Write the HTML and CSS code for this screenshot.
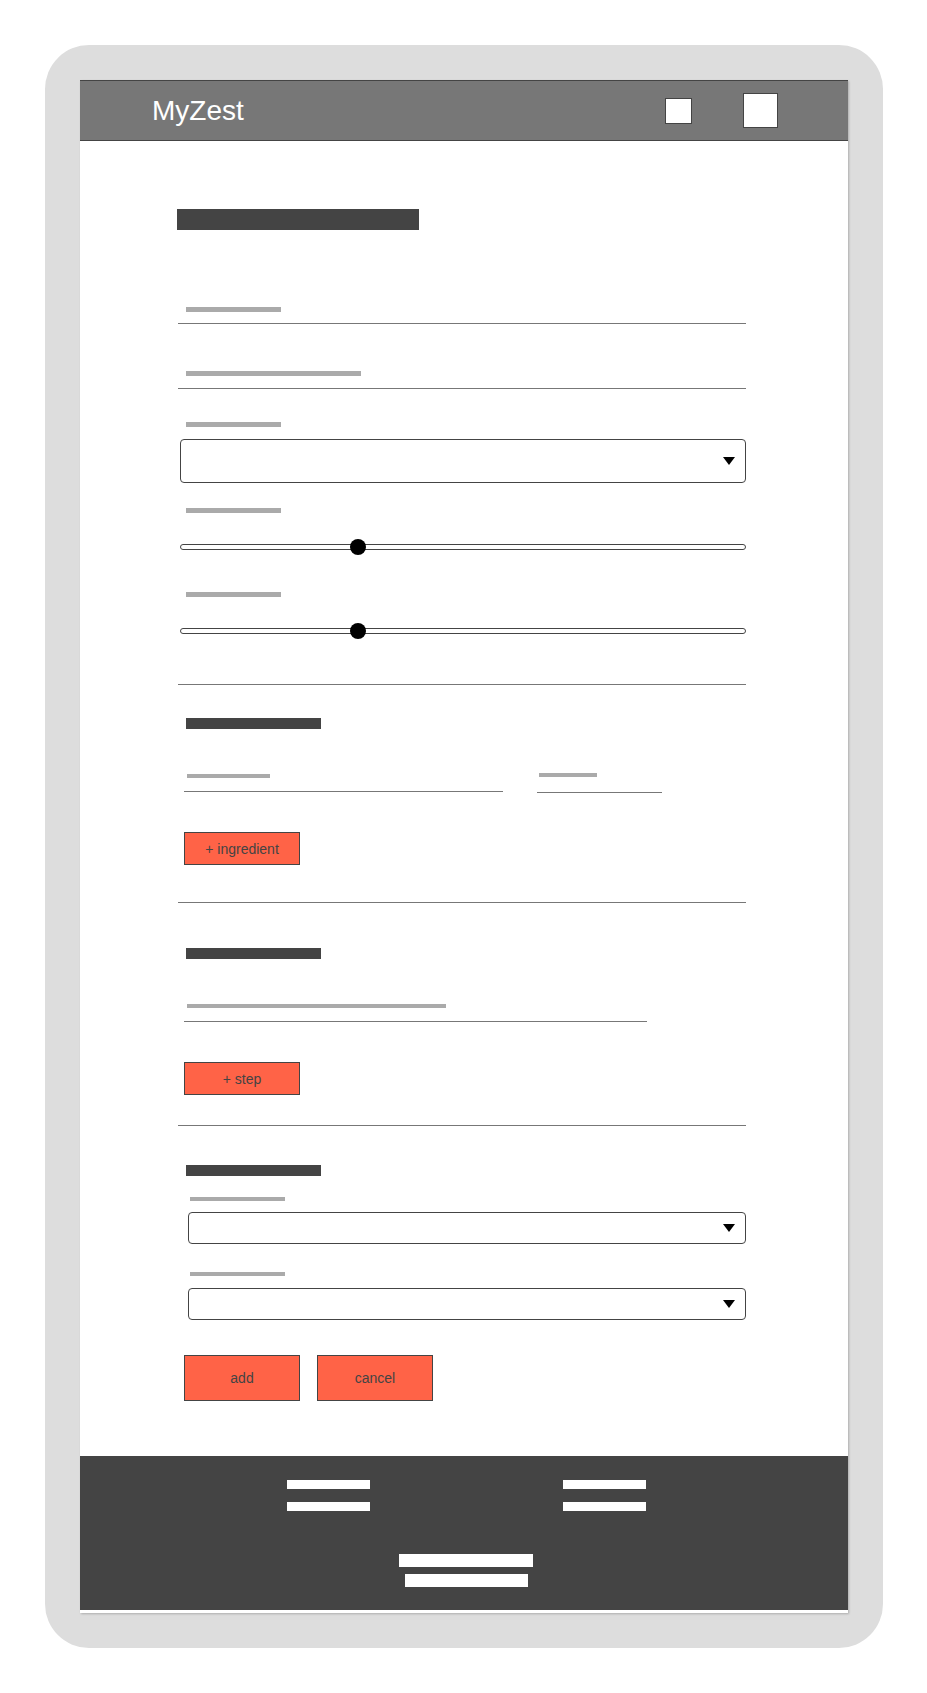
FILE: index.html
```html
<!DOCTYPE html>
<html lang="en">
<head>
<meta charset="utf-8">
<title>MyZest</title>
<link rel="stylesheet" href="styles.css">
</head>
<body>
<div class="device">
  <div class="screen">
    <header class="topbar">
      <div class="brand">MyZest</div>
      <div class="top-icons">
        <span class="icon-sm"></span>
        <span class="icon-lg"></span>
      </div>
    </header>
    <main class="main">
      <div class="page-title"></div>

      <div class="field f1">
        <div class="lbl w95"></div>
        <div class="uline"></div>
      </div>
      <div class="field f2">
        <div class="lbl w175"></div>
        <div class="uline g12"></div>
      </div>
      <div class="field f3">
        <div class="lbl w95"></div>
        <div class="select big"><svg class="caret" width="12" height="8" viewBox="0 0 12 8"><polygon points="0,0 12,0 6,8" fill="#000"/></svg></div>
      </div>
      <div class="field f4">
        <div class="lbl w95"></div>
        <div class="slider"><span class="thumb"></span></div>
      </div>
      <div class="field f5">
        <div class="lbl w95"></div>
        <div class="slider"><span class="thumb"></span></div>
      </div>

      <div class="divider d1"></div>

      <div class="heading h1"></div>
      <div class="ing-row">
        <div class="ing-col ing-name">
          <div class="lbl w83"></div>
          <div class="uline s17"></div>
        </div>
        <div class="ing-col ing-qty">
          <div class="lbl w58"></div>
          <div class="uline s19"></div>
        </div>
      </div>
      <button class="btn small b1">+ ingredient</button>

      <div class="divider d2"></div>

      <div class="heading h2"></div>
      <div class="step-field">
        <div class="lbl w259"></div>
        <div class="uline s13"></div>
      </div>
      <button class="btn small b2">+ step</button>

      <div class="divider d3"></div>

      <div class="heading h3"></div>
      <div class="opt-field o1">
        <div class="lbl w95 thin"></div>
        <div class="select"><svg class="caret" width="12" height="8" viewBox="0 0 12 8"><polygon points="0,0 12,0 6,8" fill="#000"/></svg></div>
      </div>
      <div class="opt-field o2">
        <div class="lbl w95 thin"></div>
        <div class="select"><svg class="caret" width="12" height="8" viewBox="0 0 12 8"><polygon points="0,0 12,0 6,8" fill="#000"/></svg></div>
      </div>

      <div class="actions">
        <button class="btn large">add</button>
        <button class="btn large">cancel</button>
      </div>
    </main>
    <footer class="footer">
      <div class="foot-cols">
        <div class="foot-col"><span class="fbar"></span><span class="fbar"></span></div>
        <div class="foot-col"><span class="fbar"></span><span class="fbar"></span></div>
      </div>
      <div class="foot-bottom">
        <span class="cbar cb1"></span>
        <span class="cbar cb2"></span>
      </div>
    </footer>
  </div>
</div>
</body>
</html>
```
FILE: styles.css
```css
* { box-sizing: border-box; }
html, body { margin: 0; padding: 0; background: #fff; }
body { font-family: "Liberation Sans", Arial, sans-serif; }

.device {
  margin: 45px 0 0 45px;
  width: 838px;
  height: 1603px;
  background: #dddddd;
  border-radius: 44px;
  padding: 35px;
}

.screen {
  width: 768px;
  height: 1533px;
  background: #fff;
  box-shadow: 1px 1px 2px rgba(0,0,0,0.22);
  display: flex;
  flex-direction: column;
  padding-bottom: 3px;
}

.topbar {
  height: 61px;
  background: #777777;
  border-top: 1px solid #444;
  border-bottom: 1px solid #444;
  display: flex;
  align-items: center;
  justify-content: space-between;
  padding: 0 70px 0 72px;
}
.brand {
  color: #fff;
  font-size: 28px;
  line-height: 1;
  margin-top: 0;
}
.top-icons { display: flex; align-items: center; gap: 51px; }
.icon-sm {
  display: block;
  width: 27px; height: 26px;
  background: #fff;
  border: 1px solid #444;
  margin-top: 1px;
}
.icon-lg {
  display: block;
  width: 35px; height: 35px;
  background: #fff;
  border: 1px solid #444;
}

.main {
  flex: 1;
  padding: 68px 0 0 98px;
  display: flex;
  flex-direction: column;
  align-items: flex-start;
}

.page-title { width: 242px; height: 21px; background: #444; margin-left: -1px; }

.lbl { height: 5px; background: #aaaaaa; }
.lbl.thin { height: 4px; }
.w95 { width: 95px; }
.w175 { width: 175px; }
.w83 { width: 83px; height: 4px; }
.w58 { width: 58px; height: 4px; }
.w259 { width: 259px; height: 4px; }

.field { width: 568px; }
.field .lbl { margin-left: 8px; }
.uline { height: 1px; background: #777; margin-top: 11px; width: 100%; }
.uline.g12 { margin-top: 12px; }

.f1 { margin-top: 77px; }
.f2 { margin-top: 47px; }
.f3 { margin-top: 33px; }
.f4 { margin-top: 25px; }
.f5 { margin-top: 42px; }

.select {
  position: relative;
  margin: 11px 0 0 2px;
  width: 558px;
  height: 32px;
  border: 1px solid #444;
  border-radius: 4px;
  background: #fff;
  display: flex;
  align-items: center;
  justify-content: flex-end;
  padding-right: 10px;
}
.select.big { width: 566px; height: 44px; margin-top: 12px; }
.caret { display: block; }

.slider {
  position: relative;
  margin: 31px 0 0 2px;
  width: 566px;
  height: 6px;
  border: 1px solid #444;
  border-radius: 3px;
  background: #fff;
}
.thumb {
  position: absolute;
  left: 169px;
  top: -6px;
  width: 16px;
  height: 16px;
  border-radius: 50%;
  background: #000;
}

.divider { width: 568px; height: 1px; background: #777; }
.d1 { margin-top: 50px; }
.d2 { margin-top: 37px; }
.d3 { margin-top: 30px; }

.heading { width: 135px; height: 11px; background: #444; margin-left: 8px; }
.h1 { margin-top: 33px; }
.h2 { margin-top: 45px; }
.h3 { margin-top: 39px; }

.ing-row { display: flex; gap: 34px; margin: 44px 0 0 6px; align-items: flex-start; }
.ing-col .uline { margin-top: 13px; }
.ing-name { width: 319px; padding-top: 1px; }
.ing-name .lbl { margin-left: 3px; }
.ing-qty { width: 125px; }
.ing-qty .lbl { margin-left: 2px; }
.ing-qty .uline { margin-top: 15px; }

.step-field { width: 463px; margin: 45px 0 0 6px; }
.step-field .lbl { margin-left: 3px; }
.step-field .uline { margin-top: 13px; }

.opt-field { width: 568px; }
.opt-field .lbl { margin-left: 12px; }
.opt-field .select { margin-left: 10px; }
.o1 { margin-top: 21px; }
.o2 { margin-top: 28px; }
.o2 .select { margin-top: 12px; }

.btn {
  font-family: "Liberation Sans", Arial, sans-serif;
  font-size: 14px;
  color: #444;
  background: #ff6347;
  border: 1px solid #444;
  border-radius: 0;
  padding: 0;
  width: 116px;
  display: flex;
  align-items: center;
  justify-content: center;
}
.btn.small { height: 33px; margin-left: 6px; }
.b1 { margin-top: 39px; }
.b2 { margin-top: 40px; }
.actions { display: flex; gap: 17px; margin: 35px 0 0 6px; }
.btn.large { height: 46px; }

.footer {
  height: 154px;
  background: #444;
  padding: 24px 0 0 4px;
  display: flex;
  flex-direction: column;
  align-items: center;
}
.foot-cols { display: flex; gap: 193px; }
.foot-col { display: flex; flex-direction: column; gap: 13px; }
.fbar { display: block; width: 83px; height: 9px; background: #fff; }
.foot-bottom { display: flex; flex-direction: column; align-items: center; gap: 7px; margin-top: 43px; }
.cbar { display: block; height: 13px; background: #fff; }
.cb1 { width: 134px; }
.cb2 { width: 123px; }
```
